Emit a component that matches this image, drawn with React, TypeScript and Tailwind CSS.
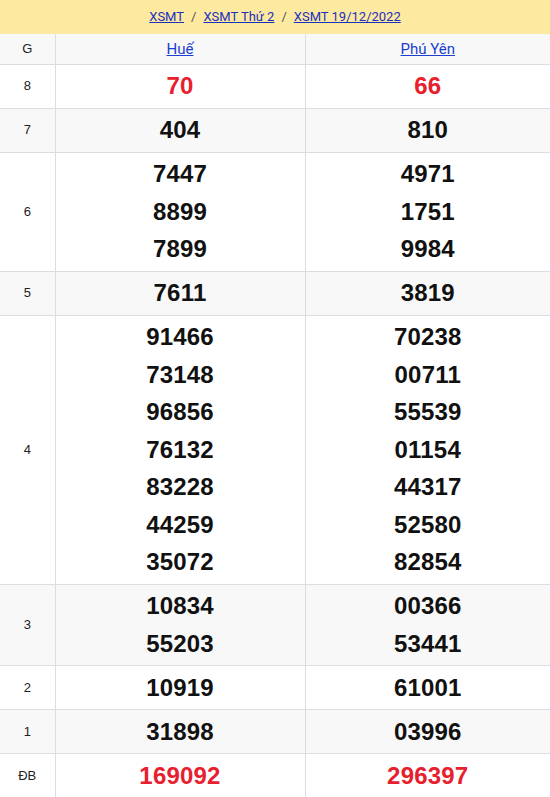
import React from 'react';

interface Prize {
  label: string;
  hue: string[];
  phuYen: string[];
  red?: boolean;
}

const prizes: Prize[] = [
  { label: '8', hue: ['70'], phuYen: ['66'], red: true },
  { label: '7', hue: ['404'], phuYen: ['810'] },
  { label: '6', hue: ['7447', '8899', '7899'], phuYen: ['4971', '1751', '9984'] },
  { label: '5', hue: ['7611'], phuYen: ['3819'] },
  {
    label: '4',
    hue: ['91466', '73148', '96856', '76132', '83228', '44259', '35072'],
    phuYen: ['70238', '00711', '55539', '01154', '44317', '52580', '82854'],
  },
  { label: '3', hue: ['10834', '55203'], phuYen: ['00366', '53441'] },
  { label: '2', hue: ['10919'], phuYen: ['61001'] },
  { label: '1', hue: ['31898'], phuYen: ['03996'] },
  { label: 'ĐB', hue: ['169092'], phuYen: ['296397'], red: true },
];

const NumberCell = ({ values, red }: { values: string[]; red?: boolean }) => (
  <td className="border-l border-[#dcdde1] py-[2.75px] text-center align-middle">
    {values.map((v, i) => (
      <div
        key={i}
        className={`text-[24px] font-bold leading-[37.5px] tracking-[0.2px] ${red ? 'text-[#e8202e]' : 'text-[#111]'}`}
      >
        {v}
      </div>
    ))}
  </td>
);

const App = () => {
  return (
    <div className="w-[550px] bg-white font-['Liberation_Sans',Arial,sans-serif]">
      <div className="flex h-[34px] items-center justify-center gap-[7px] bg-[#fde99f] text-[13px] font-['Roboto',sans-serif]">
        <a href="#" className="text-[#1b2fbf] underline">XSMT</a>
        <span className="text-[#555]">/</span>
        <a href="#" className="text-[#1b2fbf] underline">XSMT Thứ 2</a>
        <span className="text-[#555]">/</span>
        <a href="#" className="text-[#1b2fbf] underline">XSMT 19/12/2022</a>
      </div>
      <table className="w-full border-collapse">
        <colgroup>
          <col className="w-[55px]" />
          <col className="w-[250px]" />
          <col />
        </colgroup>
        <thead>
          <tr className="h-[30px] bg-[#f8f8f8] border-b border-[#dcdde1]">
            <th className="text-[13px] font-normal text-[#222]">G</th>
            <th className="border-l border-[#dcdde1] text-[15px] font-normal font-['Roboto',sans-serif]">
              <a href="#" className="text-[#1b3fcf] underline">Huế</a>
            </th>
            <th className="border-l border-[#dcdde1] text-[15px] font-normal font-['Roboto',sans-serif]">
              <a href="#" className="text-[#1b3fcf] underline">Phú Yên</a>
            </th>
          </tr>
        </thead>
        <tbody>
          {prizes.map((p, i) => (
            <tr
              key={p.label}
              className={`border-b border-[#dcdde1] ${i % 2 === 1 ? 'bg-[#f8f8f8]' : 'bg-white'}`}
            >
              <td className="text-center align-middle text-[13px] text-[#222]">{p.label}</td>
              <NumberCell values={p.hue} red={p.red} />
              <NumberCell values={p.phuYen} red={p.red} />
            </tr>
          ))}
        </tbody>
      </table>
    </div>
  );
};

export default App;
